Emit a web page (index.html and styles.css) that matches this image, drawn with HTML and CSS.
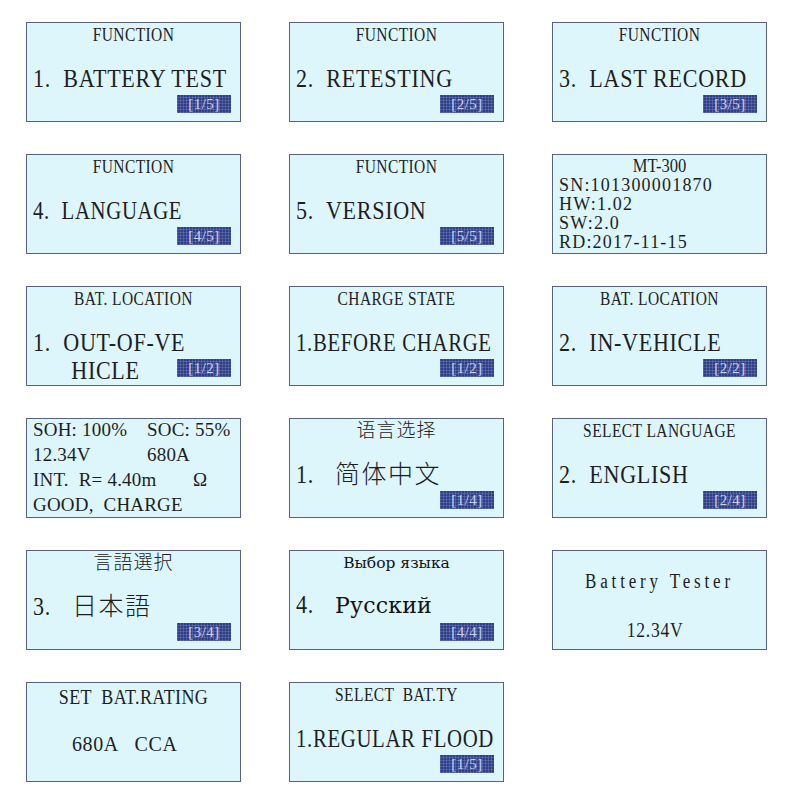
FILE: index.html
```html
<!DOCTYPE html>
<html lang="en">
<head>
<meta charset="utf-8">
<title>Battery Tester Screens</title>
<link rel="stylesheet" href="styles.css">
</head>
<body>
<div class="grid">
  <div class="lcd">
    <div class="title">FUNCTION</div>
    <div class="main">1.  BATTERY TEST</div>
    <div class="badge">[1/5]</div>
  </div>
  <div class="lcd">
    <div class="title">FUNCTION</div>
    <div class="main">2.  RETESTING</div>
    <div class="badge">[2/5]</div>
  </div>
  <div class="lcd">
    <div class="title">FUNCTION</div>
    <div class="main">3.  LAST RECORD</div>
    <div class="badge">[3/5]</div>
  </div>

  <div class="lcd">
    <div class="title">FUNCTION</div>
    <div class="main narrow">4.  LANGUAGE</div>
    <div class="badge">[4/5]</div>
  </div>
  <div class="lcd">
    <div class="title">FUNCTION</div>
    <div class="main">5.  VERSION</div>
    <div class="badge">[5/5]</div>
  </div>
  <div class="lcd info">
    <div class="info-title">MT-300</div>
    <div class="info-line">SN:101300001870</div>
    <div class="info-line">HW:1.02</div>
    <div class="info-line">SW:2.0</div>
    <div class="info-line">RD:2017-11-15</div>
  </div>

  <div class="lcd">
    <div class="title">BAT. LOCATION</div>
    <div class="main">1.  OUT-OF-VE</div>
    <div class="main indent">HICLE</div>
    <div class="badge">[1/2]</div>
  </div>
  <div class="lcd">
    <div class="title">CHARGE STATE</div>
    <div class="main tight">1.BEFORE CHARGE</div>
    <div class="badge">[1/2]</div>
  </div>
  <div class="lcd">
    <div class="title">BAT. LOCATION</div>
    <div class="main">2.  IN-VEHICLE</div>
    <div class="badge">[2/2]</div>
  </div>

  <div class="lcd result">
    <div class="res-row"><span class="res-col">SOH: 100%</span><span>SOC: 55%</span></div>
    <div class="res-row"><span class="res-col">12.34V</span><span>680A</span></div>
    <div class="res-row"><span class="res-col wide">INT.  R= 4.40m</span><span>Ω</span></div>
    <div class="res-row"><span>GOOD,  CHARGE</span></div>
  </div>
  <div class="lcd">
    <div class="title-cjk cjk-sc">语言选择</div>
    <div class="main-cjk"><span class="num">1.</span><span class="cjk-sc big">简体中文</span></div>
    <div class="badge">[1/4]</div>
  </div>
  <div class="lcd">
    <div class="title">SELECT LANGUAGE</div>
    <div class="main">2.  ENGLISH</div>
    <div class="badge">[2/4]</div>
  </div>

  <div class="lcd">
    <div class="title-cjk cjk-jp">言語選択</div>
    <div class="main-cjk"><span class="num">3.</span><span class="cjk-jp big">日本語</span></div>
    <div class="badge">[3/4]</div>
  </div>
  <div class="lcd">
    <div class="title-ru">Выбор языка</div>
    <div class="main-cjk ru-row"><span class="num">4.</span><span class="ru-big">Русский</span></div>
    <div class="badge">[4/4]</div>
  </div>
  <div class="lcd splash">
    <div class="splash-title">Battery Tester</div>
    <div class="splash-volt">12.34V</div>
  </div>

  <div class="lcd rating">
    <div class="rating-title">SET  BAT.RATING</div>
    <div class="rating-value">680A   CCA</div>
  </div>
  <div class="lcd">
    <div class="title">SELECT  BAT.TY</div>
    <div class="main tight">1.REGULAR FLOOD</div>
    <div class="badge">[1/5]</div>
  </div>
</div>
</body>
</html>
```

FILE: styles.css
```css
html, body {
  margin: 0;
  padding: 0;
  background: #ffffff;
}

body {
  font-family: "Liberation Serif", "Times New Roman", serif;
  color: #1e1e1e;
}

.grid {
  display: grid;
  grid-template-columns: repeat(3, 215px);
  grid-auto-rows: 100px;
  column-gap: 48px;
  row-gap: 32px;
  padding: 22px 0 0 26px;
}

.lcd {
  position: relative;
  box-sizing: border-box;
  height: 100px;
  background: #dcf6fc;
  border: 1.5px solid #58627e;
  padding: 2px 6px 0 6px;
}

.title {
  text-align: center;
  font-size: 18px;
  line-height: 20px;
  color: #222;
  white-space: pre;
  letter-spacing: 0.5px;
  transform: scaleX(0.86);
  transform-origin: center;
}

.main {
  margin-top: 20px;
  font-size: 26px;
  line-height: 28px;
  white-space: pre;
  letter-spacing: 0.8px;
  transform: scaleX(0.85);
  transform-origin: left center;
}

.main.tight {
  transform: scaleX(0.8);
}

.main.narrow {
  transform: scaleX(0.8);
}

.main.indent {
  margin-top: 0;
  padding-left: 45px;
}

.cjk-sc {
  font-family: "Noto Sans CJK SC", sans-serif;
  font-weight: 300;
}

.cjk-jp {
  font-family: "Noto Sans CJK JP", sans-serif;
  font-weight: 300;
}

.title-cjk {
  text-align: center;
  font-size: 19px;
  line-height: 20px;
  letter-spacing: 1px;
  color: #222;
  margin-top: -2px;
}

.title-ru {
  text-align: center;
  font-family: "DejaVu Serif", serif;
  font-size: 15.5px;
  line-height: 20px;
  color: #111;
}

.main-cjk {
  display: flex;
  align-items: baseline;
  margin-top: 18px;
  line-height: 30px;
}

.main-cjk.ru-row {
  margin-top: 17px;
}

.num {
  width: 39px;
  font-size: 26px;
  letter-spacing: 0.8px;
  transform: scaleX(0.85);
  transform-origin: left center;
}

.big {
  font-size: 25px;
  letter-spacing: 1.5px;
}

.ru-big {
  font-family: "DejaVu Serif", serif;
  font-size: 22px;
  color: #111;
  letter-spacing: 0.2px;
}

.badge {
  position: absolute;
  right: 9px;
  bottom: 8px;
  width: 54px;
  height: 18px;
  box-sizing: border-box;
  background-color: #2f3f86;
  background-image:
    repeating-linear-gradient(90deg, rgba(170, 185, 235, 0.22) 0 1px, transparent 1px 3px),
    repeating-linear-gradient(0deg, rgba(170, 185, 235, 0.22) 0 1px, transparent 1px 3px);
  color: #c9d0f2;
  font-size: 15px;
  line-height: 18px;
  text-align: center;
  letter-spacing: 0.5px;
}

/* version screen */
.info-title {
  text-align: center;
  font-size: 18px;
  line-height: 19px;
  transform: scaleX(0.92);
}

.info-line {
  font-size: 18px;
  line-height: 19px;
  letter-spacing: 1.2px;
}

/* result screen */
.result {
  padding: 0 6px;
}

.res-row {
  display: flex;
  font-size: 19px;
  line-height: 25px;
  white-space: pre;
  letter-spacing: 0.2px;
}

.res-row:first-child {
  margin-top: -2px;
}

.res-col {
  width: 114px;
}

.res-col.wide {
  width: 160px;
}

/* splash screen */
.splash {
  padding-top: 0;
  text-align: center;
}

.splash-title {
  margin-top: 18px;
  font-size: 20px;
  line-height: 24px;
  white-space: pre;
  letter-spacing: 4.5px;
  transform: scaleX(0.85);
}

.splash-volt {
  margin-top: 25px;
  padding-right: 10px;
  font-size: 20px;
  line-height: 24px;
  letter-spacing: 0.8px;
  transform: scaleX(0.88);
}

/* rating screen */
.rating-title {
  text-align: center;
  font-size: 20px;
  line-height: 24px;
  white-space: pre;
  letter-spacing: 0.4px;
  transform: scaleX(0.9);
}

.rating-value {
  margin-top: 23px;
  padding-left: 39px;
  font-size: 20px;
  line-height: 24px;
  white-space: pre;
  letter-spacing: 0.6px;
}
```
